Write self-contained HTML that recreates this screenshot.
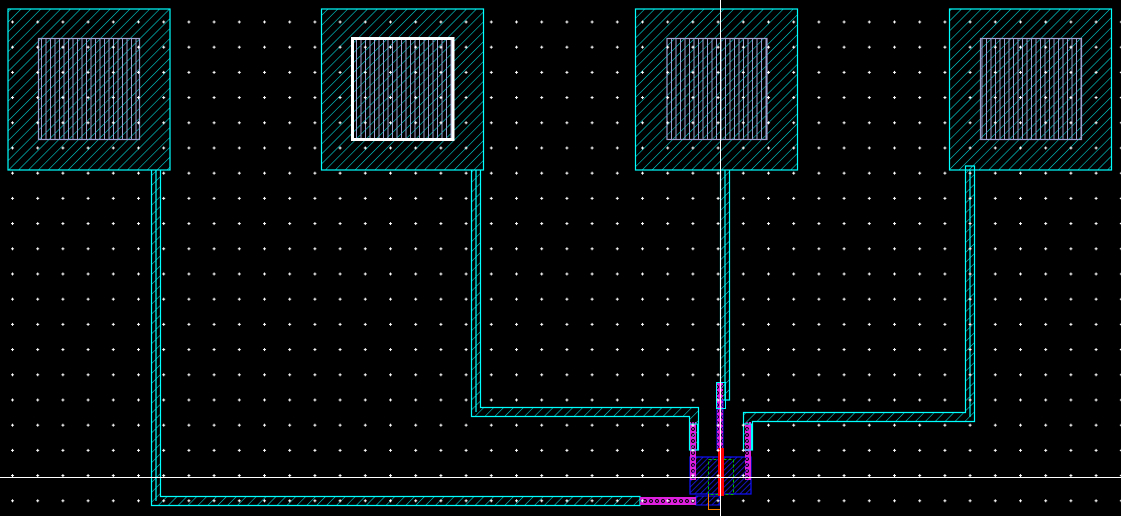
<!DOCTYPE html>
<html><head><style>html,body{margin:0;padding:0;background:#000;overflow:hidden}svg{display:block}</style></head><body>
<svg width="1121" height="516" xmlns="http://www.w3.org/2000/svg">
<defs>
<pattern id="d" width="25.2" height="25.2" patternUnits="userSpaceOnUse" x="11" y="20.5"><path d="M0 1.5h3M1.5 0v3" stroke="#fff" stroke-width="1"/></pattern>
<pattern id="h" width="7" height="7" patternUnits="userSpaceOnUse" patternTransform="rotate(45)"><line x1="0" y1="0" x2="0" y2="7" stroke="#00e5e5" stroke-width="1.1"/></pattern>
<pattern id="v" width="4.5" height="10" patternUnits="userSpaceOnUse"><line x1="1" y1="0" x2="1" y2="10" stroke="#a0a0d0" stroke-width="1"/></pattern>
<pattern id="b" width="4" height="4" patternUnits="userSpaceOnUse" patternTransform="rotate(45)"><line x1="0" y1="0" x2="0" y2="4" stroke="#1818e8" stroke-width="1.6"/></pattern>
<pattern id="m" width="6" height="6" patternUnits="userSpaceOnUse"><rect x=".5" y=".5" width="5" height="5" fill="none" stroke="#e020e0"/><path d="M1 1l4 4M5 1l-4 4" stroke="#e020e0" stroke-width=".7"/></pattern>
</defs>
<g stroke="#00ffff" stroke-width="1.2">
<rect x="8" y="9" width="162" height="161" fill="url(#h)"/>
<rect x="321.5" y="9" width="162" height="161" fill="url(#h)"/>
<rect x="635.5" y="9" width="162" height="161" fill="url(#h)"/>
<rect x="949.5" y="9" width="162" height="161" fill="url(#h)"/>
<path d="M151.5 170V505.5H640V496.5H160.5V170" fill="url(#h)"/>
<path d="M471.5 170V416.5H689.5V450H698.5V407.5H480.5V170" fill="url(#h)"/>
<path d="M720.5 170V400H729.5V170" fill="url(#h)"/>
<path d="M965.5 166V412.5H743.5V450H752.5V421.5H974.5V166Z" fill="url(#h)"/>
<path d="M156 170V501M476 170V412M725 170V400M970 170V417"/>
</g>
<g stroke="#a0a0d0" stroke-width="1.2">
<rect x="38.5" y="38.5" width="101" height="101" fill="url(#v)"/>
<rect x="352" y="38.5" width="101" height="101" fill="url(#v)"/>
<rect x="667" y="38.5" width="100" height="101" fill="url(#v)"/>
<rect x="980.5" y="38.5" width="101" height="101" fill="url(#v)"/>
</g>
<rect x="352.5" y="38.5" width="100.5" height="101" fill="none" stroke="#fff" stroke-width="3"/>
<rect x="690" y="457" width="61" height="37" fill="url(#b)" stroke="#1010ff" stroke-width="1.2"/>
<rect x="696" y="496" width="24" height="9" fill="url(#b)" stroke="#1010ff"/>
<rect x="717" y="400" width="6" height="50" fill="url(#b)" stroke="#1010ff"/>
<rect x="708.5" y="459.5" width="25" height="35" fill="none" stroke="#00c000" stroke-dasharray="3,2"/>
<path d="M708.5 494v15.5h12" fill="none" stroke="#ff8000"/>
<rect x="690" y="422" width="6" height="58" fill="url(#m)"/>
<rect x="745" y="422" width="6" height="58" fill="url(#m)"/>
<rect x="717" y="382" width="6" height="68" fill="url(#m)"/>
<rect x="640" y="497" width="56" height="8" fill="url(#m)"/>
<rect x="718" y="448" width="6" height="48" fill="#ff0000"/>
<rect x="716.5" y="382.5" width="9" height="26" fill="none" stroke="#00ffff"/>
<rect x="689.5" y="424" width="8" height="26" fill="none" stroke="#00ffff"/>
<rect x="743.5" y="424" width="8" height="26" fill="none" stroke="#00ffff"/>
<rect width="1121" height="516" fill="url(#d)"/>
<line x1="720.5" y1="0" x2="720.5" y2="516" stroke="#fff"/>
<line x1="0" y1="477.5" x2="1121" y2="477.5" stroke="#fff"/>
</svg>
</body></html>
